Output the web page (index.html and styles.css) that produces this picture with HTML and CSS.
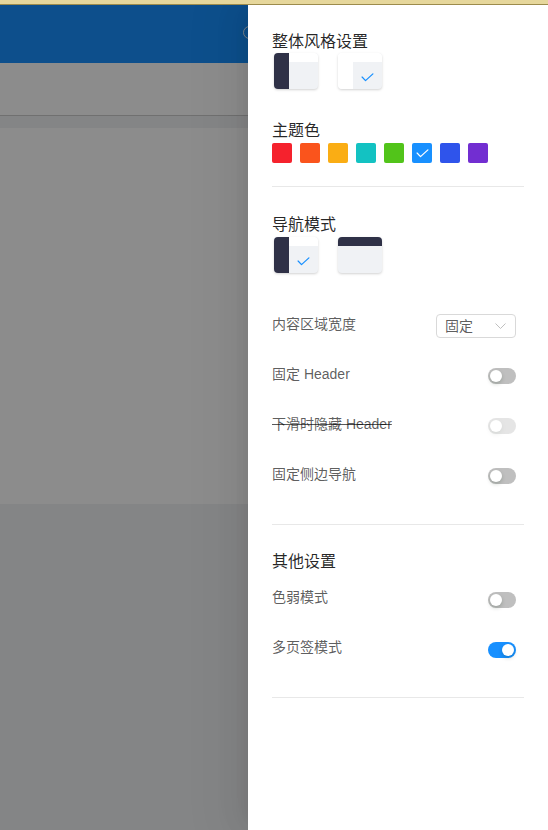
FILE: index.html
```html
<!DOCTYPE html>
<html lang="zh-CN">
<head>
<meta charset="utf-8">
<title>设置</title>
<link rel="stylesheet" href="styles.css">
</head>
<body>
<div class="topstrip"></div>
<div class="app">
  <header class="header"><span class="header-icon"></span></header>
  <div class="pagehead"></div>
  <div class="card"></div>
  <div class="mask"></div>
  <aside class="drawer">
    <h3 class="title">整体风格设置</h3>
    <div class="blocks blocks-style">
      <div class="block side dark"></div>
      <div class="block side light">
        <svg class="check" viewBox="0 0 14 10"><polyline points="1,4.5 4.8,8.5 13,1"/></svg>
      </div>
    </div>

    <h3 class="title t-theme">主题色</h3>
    <div class="swatches">
      <span class="swatch" style="background:#f5222d"></span>
      <span class="swatch" style="background:#fa541c"></span>
      <span class="swatch" style="background:#faad14"></span>
      <span class="swatch" style="background:#13c2c2"></span>
      <span class="swatch" style="background:#52c41a"></span>
      <span class="swatch" style="background:#1890ff"><svg class="swatch-check" viewBox="0 0 14 10"><polyline points="1,4.5 4.8,8.5 13,1"/></svg></span>
      <span class="swatch" style="background:#2f54eb"></span>
      <span class="swatch" style="background:#722ed1"></span>
    </div>

    <div class="divider d1"></div>

    <h3 class="title t-nav">导航模式</h3>
    <div class="blocks blocks-nav">
      <div class="block side dark">
        <svg class="check" viewBox="0 0 14 10"><polyline points="1,4.5 4.8,8.5 13,1"/></svg>
      </div>
      <div class="block top"></div>
    </div>

    <div class="list list-main">
      <div class="row">
        <span>内容区域宽度</span>
        <div class="select">
          <span>固定</span>
          <svg class="arrow" viewBox="0 0 11 6"><polyline points="0.5,0.5 5.5,5.5 10.5,0.5"/></svg>
        </div>
      </div>
      <div class="row">
        <span>固定 Header</span>
        <span class="switch"></span>
      </div>
      <div class="row">
        <span class="strike">下滑时隐藏 Header</span>
        <span class="switch disabled"></span>
      </div>
      <div class="row">
        <span>固定侧边导航</span>
        <span class="switch"></span>
      </div>
    </div>

    <div class="divider d2"></div>

    <h3 class="title t-other">其他设置</h3>
    <div class="list list-other">
      <div class="row">
        <span>色弱模式</span>
        <span class="switch"></span>
      </div>
      <div class="row">
        <span>多页签模式</span>
        <span class="switch on"></span>
      </div>
    </div>

    <div class="divider d3"></div>
  </aside>
</div>
</body>
</html>
```
FILE: styles.css
```css
* { box-sizing: border-box; }

html, body {
  margin: 0;
  padding: 0;
}

body {
  width: 548px;
  height: 830px;
  overflow: hidden;
  font-family: "Liberation Sans", "Noto Sans CJK SC", sans-serif;
}

.topstrip {
  height: 5px;
  background: #e6d79c;
  border-bottom: 1px solid #9c8b4c;
}

.app {
  position: relative;
  height: 825px;
  background: #f0f2f5;
  overflow: hidden;
}

.header {
  position: relative;
  height: 58px;
  background: #1890ff;
}

.header-icon {
  position: absolute;
  left: 243px;
  top: 21px;
  width: 13px;
  height: 13px;
  border: 1.5px solid #fff;
  border-radius: 50%;
  opacity: 0.85;
}

.pagehead {
  height: 53px;
  background: #fff;
  border-bottom: 1px solid #cdcdcd;
}

.card {
  margin-top: 12px;
  height: 376px;
  background: #fff;
}

.mask {
  position: absolute;
  inset: 0;
  background: rgba(0, 0, 0, 0.45);
}

.drawer {
  position: absolute;
  top: 0;
  right: 0;
  width: 300px;
  height: 100%;
  background: #fff;
  padding: 25px 24px 24px;
  box-shadow: -6px 0 16px -8px rgba(0, 0, 0, 0.08), -9px 0 28px 0 rgba(0, 0, 0, 0.05), -12px 0 48px 16px rgba(0, 0, 0, 0.03);
}

.title {
  margin: 0;
  font-size: 16px;
  line-height: 24px;
  font-weight: 400;
  color: rgba(0, 0, 0, 0.85);
}

.t-theme { margin-top: 30px; }
.t-nav { margin-top: 26px; }
.t-other { margin-top: 25px; }

.blocks {
  display: flex;
  gap: 20px;
  padding-left: 2px;
}

.blocks-style { margin-top: -1px; }
.blocks-nav { margin-top: 0; }

.block {
  position: relative;
  width: 44px;
  height: 36px;
  border-radius: 4px;
  overflow: hidden;
  background: #f0f2f5;
  box-shadow: 0 1px 2.5px 0 rgba(0, 0, 0, 0.18);
}

.block::before {
  content: "";
  position: absolute;
  top: 0;
  left: 0;
  width: 100%;
  height: 25%;
  background: #fff;
}

.block.side::after {
  content: "";
  position: absolute;
  top: 0;
  left: 0;
  width: 33%;
  height: 100%;
  background: #fff;
}

.block.side.dark::after { background: #2f3147; }

.block.top::before { background: #2f3147; }

.check {
  position: absolute;
  right: 8px;
  bottom: 7px;
  width: 13px;
  height: 9px;
  z-index: 1;
}

.check polyline,
.swatch-check polyline {
  fill: none;
  stroke: #1890ff;
  stroke-width: 1.4;
  stroke-linecap: round;
  stroke-linejoin: round;
}

.swatches {
  display: flex;
  gap: 8px;
  margin-top: 0;
}

.swatch {
  display: flex;
  align-items: center;
  justify-content: center;
  width: 20px;
  height: 20px;
  border-radius: 2px;
}

.swatch-check {
  width: 13px;
  height: 9px;
}

.swatch-check polyline { stroke: #fff; }

.divider {
  height: 1px;
  background: #e8e8e8;
}

.d1 { margin-top: 23px; }
.d2 { margin-top: 22px; }
.d3 { margin-top: 23px; }

.list-main { margin-top: 29px; }

.row {
  display: flex;
  justify-content: space-between;
  align-items: flex-start;
  height: 50px;
  padding: 12px 8px 0 0;
  font-size: 14px;
  line-height: 22px;
  color: rgba(0, 0, 0, 0.65);
}

.list-main .row > span:first-child { margin-top: -1px; }

.strike { text-decoration: line-through; }

.select {
  display: flex;
  align-items: center;
  justify-content: space-between;
  width: 80px;
  height: 24px;
  padding: 0 9px 0 8px;
  border: 1px solid #d9d9d9;
  border-radius: 4px;
  color: rgba(0, 0, 0, 0.65);
}

.arrow {
  width: 11px;
  height: 6px;
}

.arrow polyline {
  fill: none;
  stroke: #bfbfbf;
  stroke-width: 1;
}

.switch {
  position: relative;
  width: 28px;
  height: 16px;
  margin-top: 4px;
  border-radius: 8px;
  background: #bfbfbf;
}

.list-other .switch { margin-top: 6px; }

.switch::after {
  content: "";
  position: absolute;
  top: 2px;
  left: 2px;
  width: 12px;
  height: 12px;
  border-radius: 50%;
  background: #fff;
  box-shadow: 0 2px 4px 0 rgba(0, 35, 11, 0.2);
}

.switch.on { background: #1890ff; }
.switch.on::after { left: 14px; }

.switch.disabled { opacity: 0.4; }
```
